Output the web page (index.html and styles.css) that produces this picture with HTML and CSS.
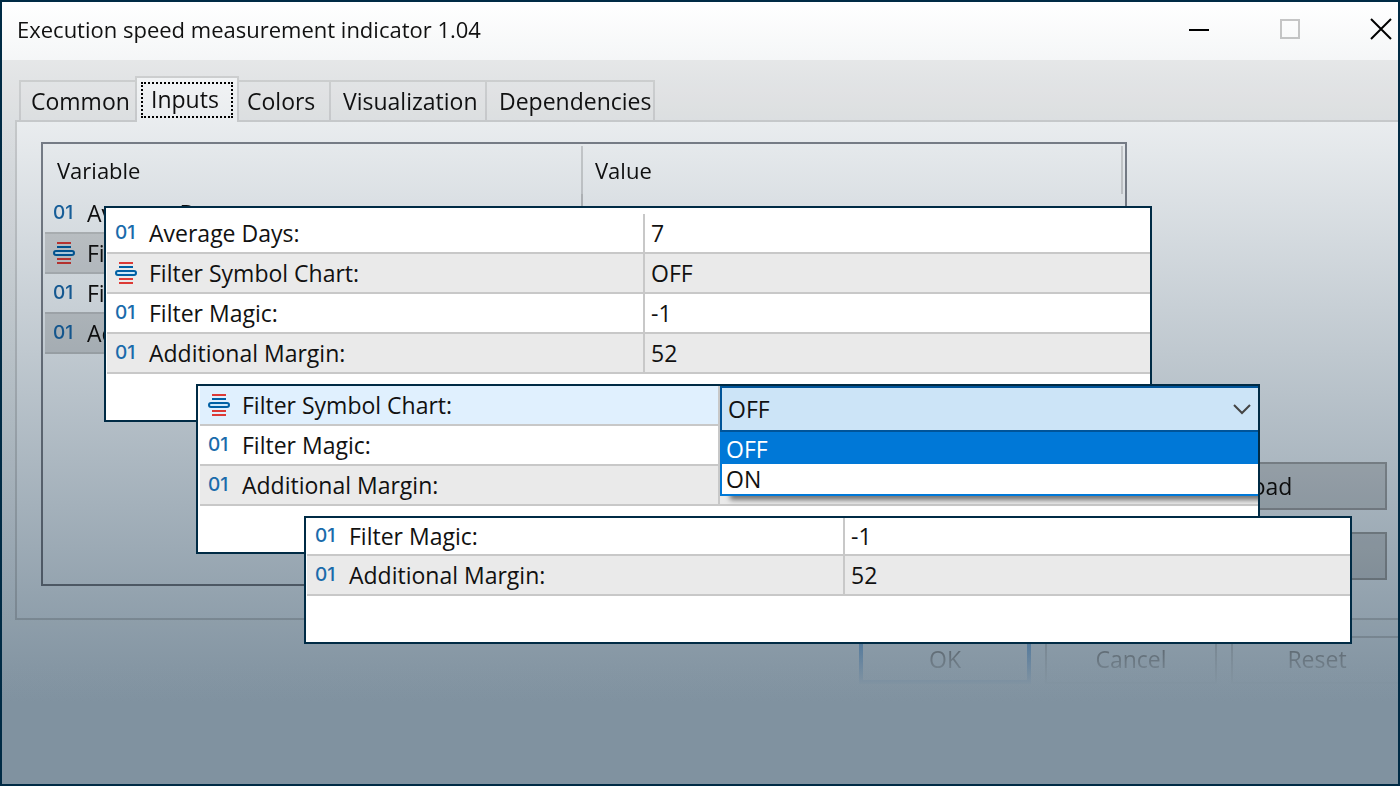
FILE: index.html
```
<!DOCTYPE html>
<html lang="en">
<head>
<meta charset="utf-8">
<title>Execution speed measurement indicator 1.04</title>
<link rel="stylesheet" href="styles.css">
</head>
<body>
<svg class="sprite" aria-hidden="true">
  <symbol id="enum" viewBox="0 0 22 22">
    <path d="M4 1h14M4 17h14M4 21h14" stroke="#dc3a36" stroke-width="2"/>
    <path d="M4 5h14" stroke="#0060a4" stroke-width="2"/>
    <rect x="1" y="9" width="20" height="4" rx="2" fill="#cfe9fa" stroke="#0060a4" stroke-width="2"/>
  </symbol>
</svg>
<main class="window">
  <div class="dialog">
    <header class="titlebar">
      <h1 class="title">Execution speed measurement indicator 1.04</h1>
      <div class="controls">
        <button class="control" aria-label="Minimize"><svg width="22" height="22"><path d="M1 12h20" stroke="#000" stroke-width="2"/></svg></button>
        <button class="control" aria-label="Maximize" disabled><svg width="22" height="22"><path d="M2 2h18v18H2z" fill="none" stroke="#c8c8c8" stroke-width="2"/></svg></button>
        <button class="control" aria-label="Close"><svg width="22" height="22"><path d="M1 1l20 20M21 1L1 21" stroke="#000" stroke-width="2"/></svg></button>
      </div>
    </header>
    <div class="tabs" role="tablist">
      <button class="tab" role="tab">Common</button>
      <button class="tab active" role="tab" aria-selected="true"><span class="focus">Inputs</span></button>
      <button class="tab" role="tab">Colors</button>
      <button class="tab" role="tab">Visualization</button>
      <button class="tab" role="tab">Dependencies</button>
    </div>
    <section class="panel">
      <div class="list">
        <table class="grid base">
          <colgroup><col class="name-col"><col></colgroup>
          <thead><tr><th>Variable</th><th>Value</th></tr></thead>
          <tbody>
            <tr><td><span class="name"><span class="num">01</span>Average Days:</span></td><td></td></tr>
            <tr class="alt"><td><span class="name"><svg class="icon"><use href="#enum"/></svg>Filter Symbol Chart:</span></td><td></td></tr>
            <tr><td><span class="name"><span class="num">01</span>Filter Magic:</span></td><td></td></tr>
            <tr class="alt"><td><span class="name"><span class="num">01</span>Additional Margin:</span></td><td></td></tr>
          </tbody>
        </table>
      </div>
      <div class="side">
        <button class="push">Load</button>
        <button class="push" aria-label="Save"></button>
      </div>
    </section>
    <footer class="footer">
      <button class="push ok">OK</button>
      <button class="push">Cancel</button>
      <button class="push">Reset</button>
    </footer>
    <div class="shade"></div>
  </div>

  <section class="sheet first">
    <table class="grid">
      <colgroup><col class="name-col"><col></colgroup>
      <tbody>
        <tr><td><span class="name"><span class="num">01</span>Average Days:</span></td><td>7</td></tr>
        <tr class="alt"><td><span class="name"><svg class="icon"><use href="#enum"/></svg>Filter Symbol Chart:</span></td><td>OFF</td></tr>
        <tr><td><span class="name"><span class="num">01</span>Filter Magic:</span></td><td>-1</td></tr>
        <tr class="alt"><td><span class="name"><span class="num">01</span>Additional Margin:</span></td><td>52</td></tr>
      </tbody>
    </table>
  </section>

  <section class="sheet second">
    <table class="grid">
      <colgroup><col class="name-col"><col></colgroup>
      <tbody>
        <tr class="selected"><td><label class="name" for="filter"><svg class="icon"><use href="#enum"/></svg>Filter Symbol Chart:</label></td><td></td></tr>
        <tr><td><span class="name"><span class="num">01</span>Filter Magic:</span></td><td></td></tr>
        <tr class="alt"><td><span class="name"><span class="num">01</span>Additional Margin:</span></td><td></td></tr>
      </tbody>
    </table>
    <div class="combo">
      <div class="field">
        <select id="filter" class="select"><option>OFF</option><option>ON</option></select>
        <svg class="chevron" width="18" height="11"><path d="M1 1l8 8 8-8" fill="none" stroke="#444" stroke-width="2"/></svg>
      </div>
      <ul class="options" role="listbox" aria-label="Filter Symbol Chart">
        <li class="option current" role="option" aria-selected="true">OFF</li>
        <li class="option" role="option">ON</li>
      </ul>
    </div>
  </section>

  <section class="sheet third">
    <table class="grid">
      <colgroup><col class="name-col"><col></colgroup>
      <tbody>
        <tr><td><span class="name"><span class="num">01</span>Filter Magic:</span></td><td>-1</td></tr>
        <tr class="alt"><td><span class="name"><span class="num">01</span>Additional Margin:</span></td><td>52</td></tr>
      </tbody>
    </table>
  </section>
</main>
</body>
</html>
```
FILE: styles.css
```
* { box-sizing: border-box; }
body { margin: 0; font: 23px/32px "Open Sans", "Noto Sans", sans-serif; color: #111; }
button, select { font: inherit; color: inherit; margin: 0; padding: 0; border: 0; border-radius: 0; background: none; }
.sprite { position: absolute; width: 0; height: 0; }
.window { position: relative; min-height: 100vh; border: 2px solid #002b45; overflow: hidden; display: flex; }

.dialog { position: relative; isolation: isolate; flex: 1; min-width: 0; background: linear-gradient(#f0f0f0 120px, #fff 700px); }
.shade { position: absolute; inset: 0; background: linear-gradient(#fff, #8092a0 700px); mix-blend-mode: multiply; pointer-events: none; }

.titlebar { display: flex; justify-content: space-between; align-items: center; height: 58px; padding: 0 6px 4px 15px; background: #fff; }
.title { margin: 0; font-size: 22px; font-weight: 400; }
.controls { display: flex; gap: 69px; }
.control { width: 22px; height: 22px; }
.control svg { display: block; }

.tabs { display: flex; align-items: flex-end; height: 62px; padding-left: 17px; margin-bottom: -2px; position: relative; }
.tab { height: 42px; border: 2px solid #d8d8d8; margin-right: -2px; padding: 0 4px 0 10px; text-align: left; white-space: nowrap; }
.tab:nth-child(1) { width: 118px; }
.tab:nth-child(3) { width: 94px; padding-left: 8px; }
.tab:nth-child(4) { width: 158px; padding-left: 12px; }
.tab:nth-child(5) { width: 170px; padding-left: 12px; }
.tab.active { width: 104px; height: 46px; padding: 4px 4px 6px; border-bottom: 0; background: #fff; }
.focus { display: block; height: 36px; border: 2px dotted #000; padding-left: 8px; line-height: 30px; }

.panel { display: flex; height: 500px; margin-left: 13px; padding: 20px 11px 32px 24px; border: 2px solid #d8d8d8; border-right: 0; background: #fff; }
.list { flex: 1; border: 2px solid #828790; padding: 2px; }
.side { width: 260px; padding-left: 18px; display: flex; flex-direction: column; justify-content: flex-end; gap: 22px; padding-bottom: 6px; }
.push { height: 48px; border: 2px solid #adadad; background: #dcdcdc; }

.footer { display: flex; justify-content: flex-end; gap: 14px; margin: 16px -5px 0 0; -webkit-mask-image: linear-gradient(rgba(0,0,0,.45), rgba(0,0,0,.02)); mask-image: linear-gradient(rgba(0,0,0,.45), rgba(0,0,0,.02)); }
.footer .push { width: 172px; padding-bottom: 2px; background: none; }
.footer .ok { border: 4px solid #0078d7; }

.grid { width: 100%; border-collapse: separate; border-spacing: 0; table-layout: fixed; }
.grid td { height: 40px; padding: 0 0 0 6px; border-bottom: 2px solid #c8c8c8; white-space: nowrap; }
.grid th { height: 48px; padding: 0 0 0 12px; font-size: 22px; font-weight: 400; text-align: left; border-right: 2px solid #d8d8d8; }
.grid td:first-child { padding-left: 8px; border-right: 2px solid #c8c8c8; }
.alt { background: #eaeaea; }
.selected { background: #e0f0fe; }
.name { display: flex; align-items: center; gap: 12px; }
.icon { width: 22px; height: 22px; flex: none; }
.num { width: 22px; flex: none; font: 500 19px/22px Inter, sans-serif; color: #1a6bab; }

.base .name-col { width: 538px; }
.base .alt { background: #dcdcdc; }

.sheet { position: absolute; background: #fff; border: 2px solid #002b45; }
.first { top: 204px; left: 102px; right: 246px; padding: 6px 0 46px 1px; }
.first .name-col { width: 538px; }
.second { top: 382px; left: 194px; right: 138px; padding: 0 0 46px 2px; }
.second .name-col { width: 520px; }
.third { top: 514px; left: 302px; right: 46px; padding: 0 0 46px 1px; }
.third .name-col { width: 538px; }
.third tr:first-child td { height: 38px; }

.combo { position: absolute; top: 0; left: 522px; right: 0; }
.field { position: relative; }
.select { display: block; width: 100%; height: 46px; padding: 0 6px; appearance: none; background: #cce4f7; border: 2px solid #005499; border-right: 0; }
.chevron { position: absolute; right: 7px; top: 18px; pointer-events: none; }
.options { list-style: none; margin: 0; padding: 0; background: #fff; border: 2px solid #0078d7; border-width: 0 0 2px 2px; box-shadow: 8px 6px 5px -2px rgba(0,0,0,.5); clip-path: inset(0 0 -12px 0); }
.option { height: 30px; line-height: 30px; padding-left: 4px; }
.current { height: 32px; line-height: 34px; background: #0078d7; color: #fff; }
```
